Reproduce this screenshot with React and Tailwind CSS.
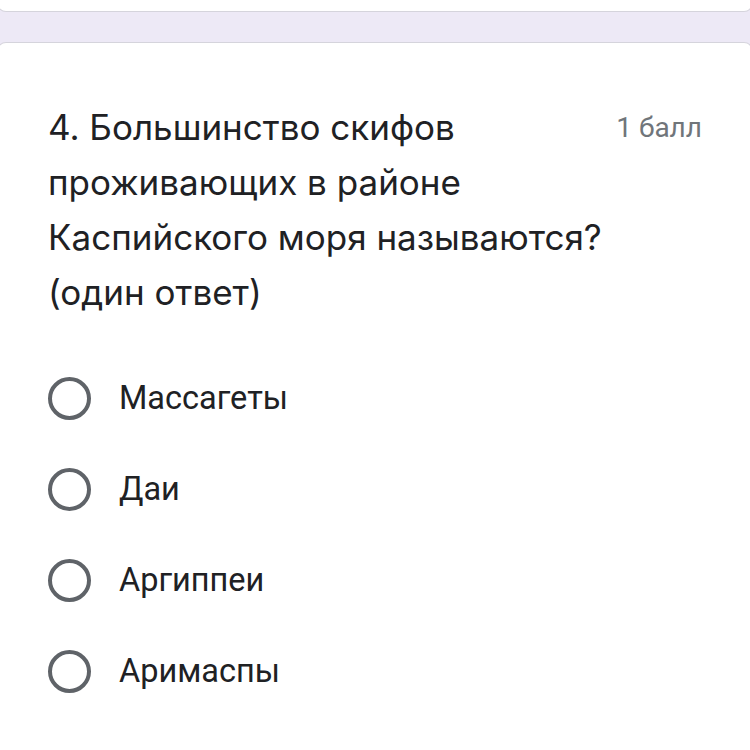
import React from 'react'

const options = ['Массагеты', 'Даи', 'Аргиппеи', 'Аримаспы']

const questionLines = [
  '4. Большинство скифов',
  'проживающих в районе',
  'Каспийского моря называются?',
  '(один ответ)',
]

const Radio = () => (
  <div className="h-[43px] w-[43px] shrink-0 rounded-full border-[4px] border-[#5f6368]" />
)

const App = () => {
  return (
    <div className="h-[750px] w-[750px] overflow-hidden bg-[#ede9f6]">
      <div className="-mx-[3px] h-[12px] rounded-b-[9px] border-x border-b border-[#d5d4dc] bg-white" />
      <div className="-mx-[3px] mt-[30px] h-[720px] rounded-t-[9px] border-x border-t border-[#d5d4dc] bg-white px-[50px] pt-[57px]">
        <div className="flex items-start justify-between">
          <h2
            className="text-[35px] leading-[55px] text-[#202124]"
            style={{ fontFamily: 'Inter, "Noto Sans", sans-serif' }}
          >
            {questionLines.map((l) => (
              <div key={l} className="whitespace-nowrap">{l}</div>
            ))}
          </h2>
          <span
            className="mt-[11px] whitespace-nowrap text-[28px] leading-[34px] text-[#70757a]"
            style={{ fontFamily: 'Roboto, sans-serif' }}
          >
            1 балл
          </span>
        </div>

        <div className="mt-[57px] flex flex-col gap-[48px]">
          {options.map((opt) => (
            <div key={opt} className="flex items-center gap-[28px]">
              <Radio />
              <span
                className="text-[32.5px] leading-[43px] text-[#202124]"
                style={{ fontFamily: 'Roboto, sans-serif' }}
              >
                {opt}
              </span>
            </div>
          ))}
        </div>
      </div>
    </div>
  )
}

export default App
